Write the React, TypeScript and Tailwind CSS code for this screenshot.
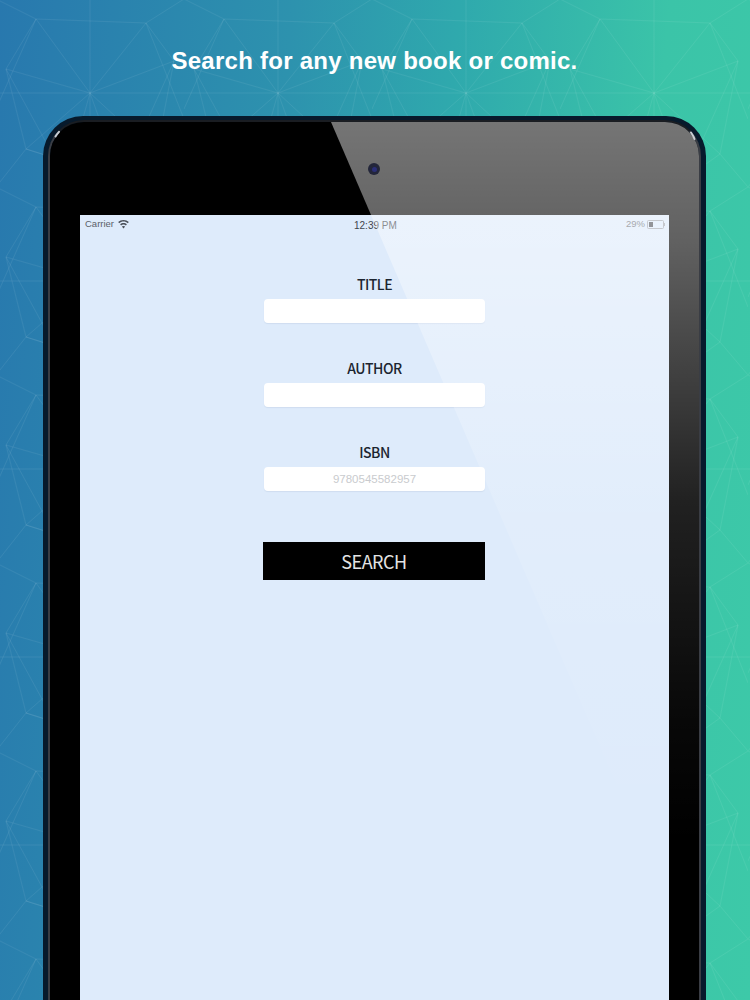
import React from 'react';

const BackgroundPattern = () => (
  <svg className="absolute inset-0 w-full h-full" width="750" height="1000" aria-hidden="true">
    <defs>
      <pattern id="mesh" x="-4" y="-1" width="188" height="188" patternUnits="userSpaceOnUse">
        <g fill="none" stroke="#ffffff" strokeOpacity="0.065" strokeWidth="1">
          <path d="M0 94H188M94 0V188" />
          <path d="M94 94L40 20M94 94L150 24M94 94L30 150M94 94L160 155M94 94L10 70M94 94L178 62M94 94L70 180M94 94L125 180" />
          <path d="M40 20L150 24L178 62L160 155L125 180L30 150L10 70Z" />
          <path d="M0 0L40 20M188 0L150 24M0 188L30 150M188 188L160 155" />
          <path d="M40 20L0 110M150 24L188 120M30 150L125 180M10 70L70 180M178 62L125 180" />
        </g>
      </pattern>
    </defs>
    <rect width="750" height="1000" fill="url(#mesh)" />
  </svg>
);

const WifiIcon = () => (
  <svg width="11" height="9" viewBox="0 0 11 9" className="text-[#4a4f58]" fill="currentColor">
    <path d="M5.5 0C3.4 0 1.6.8.2 2.1l1 1.1C2.300 2.100 3.800 1.500 5.500 1.500s3.200.6 4.300 1.700l1-1.100C9.400.8 7.600 0 5.500 0z" />
    <path d="M5.500 3C4.200 3 3 3.500 2.100 4.300l1 1.100c.6-.6 1.500-.9 2.400-.9s1.800.3 2.400.9l1-1.100C8 3.500 6.800 3 5.500 3z" />
    <path d="M5.500 6c-.7 0-1.300.3-1.700.6l1.700 1.900 1.700-1.900C6.800 6.300 6.200 6 5.500 6z" />
  </svg>
);

const BatteryIcon = () => (
  <div className="flex items-center">
    <div className="w-[17px] h-[9px] border border-[#a3a7ae] rounded-[1.5px] p-px">
      <div className="w-[4px] h-full bg-[#4d5056]" />
    </div>
    <div className="w-px h-[3px] bg-[#a3a7ae]" />
  </div>
);

const StatusBar = () => (
  <div className="relative h-[18px] flex items-center justify-between pl-[5px] pr-[4px] text-[9.500px] text-[#5b6068] font-['Liberation_Sans',sans-serif]">
    <div className="flex items-center gap-[4px]">
      <span>Carrier</span>
      <WifiIcon />
    </div>
    <span className="absolute left-[274px] top-[3px] text-[10px] text-[#3f444c]">12:39 PM</span>
    <div className="flex items-center gap-[2px] text-[#6f7379]">
      <span>29%</span>
      <BatteryIcon />
    </div>
  </div>
);

const Field = ({ label, placeholder }: { label: string; placeholder?: string }) => (
  <div className="flex flex-col items-center">
    <label className="h-[20px] leading-[20px] text-[14px] tracking-[-0.5px] font-medium text-[#1c2530] font-['Noto_Sans_CJK_JP','Noto_Sans',sans-serif]">
      {label}
    </label>
    <input
      type="text"
      placeholder={placeholder}
      className="mt-[5px] w-[221px] h-[24px] rounded-[4px] bg-white text-center text-[11.500px] outline-none shadow-[0_1px_1px_rgba(150,170,200,0.2)] placeholder:text-[#c9cbce] font-['Liberation_Sans',sans-serif]"
    />
  </div>
);

export default function App() {
  return (
    <div className="relative w-[750px] h-[1000px] overflow-hidden flex flex-col bg-[linear-gradient(95deg,#2878ae_0%,#2d92ae_35%,#2fa9ad_55%,#3bc4a8_80%,#3dc9a8_100%)]">
      <BackgroundPattern />

      <h1 className="relative h-[116px] pt-[45px] pr-[1px] text-center text-[24px] leading-[32px] font-bold tracking-[0.26px] text-white font-['Liberation_Sans',sans-serif]">
        Search for any new book or comic.
      </h1>

      {/* device */}
      <div className="relative flex-1 ml-[43px] w-[663px] flex flex-col rounded-t-[40px] bg-[#071a2c] px-[5px] pt-[4px]">
        <div className="flex-1 flex flex-col rounded-t-[36px] border-2 border-b-0 border-[#3a3d44] border-t-[#1a1d22] overflow-hidden">
          <div className="relative flex-1 flex flex-col bg-black px-[30px]">
            <div className="relative z-10 h-[93px] flex items-center justify-center pt-[1px] pr-[1px]">
              <div className="w-[12px] h-[12px] rounded-full bg-[#23263a] flex items-center justify-center">
                <div className="w-[5px] h-[5px] rounded-full bg-[#2b2f78]" />
              </div>
            </div>

            <div className="flex-1 flex flex-col bg-[#deebfb]">
              <StatusBar />
              <div className="flex flex-col gap-[35px] pt-[41px]">
                <Field label="TITLE" />
                <Field label="AUTHOR" />
                <Field label="ISBN" placeholder="9780545582957" />
              </div>
              <button className="mt-[51px] ml-[183px] w-[222px] h-[38px] bg-black text-[#e4e4e4] text-[18px] tracking-[-0.5px] font-['Noto_Sans_CJK_JP','Noto_Sans',sans-serif]">
                SEARCH
              </button>
            </div>

            {/* glass reflection */}
            <div className="absolute inset-0 pointer-events-none [clip-path:polygon(281px_0,659px_878px,659px_0)] bg-[linear-gradient(180deg,rgba(255,255,255,0.46)_0px,rgba(255,255,255,0.38)_120px,rgba(255,255,255,0.13)_380px,rgba(255,255,255,0.03)_600px,rgba(255,255,255,0)_720px)]" />
          </div>
        </div>

        {/* corner highlights */}
        <svg className="absolute left-0 top-0 pointer-events-none" width="663" height="40" fill="none" stroke="#c9ced4" strokeWidth="2" strokeLinecap="round">
          <path d="M12.500 20.500Q14 18 16 15.800" />
          <path d="M648 16.500Q650.500 20 651.500 23" />
        </svg>
      </div>
    </div>
  );
}
